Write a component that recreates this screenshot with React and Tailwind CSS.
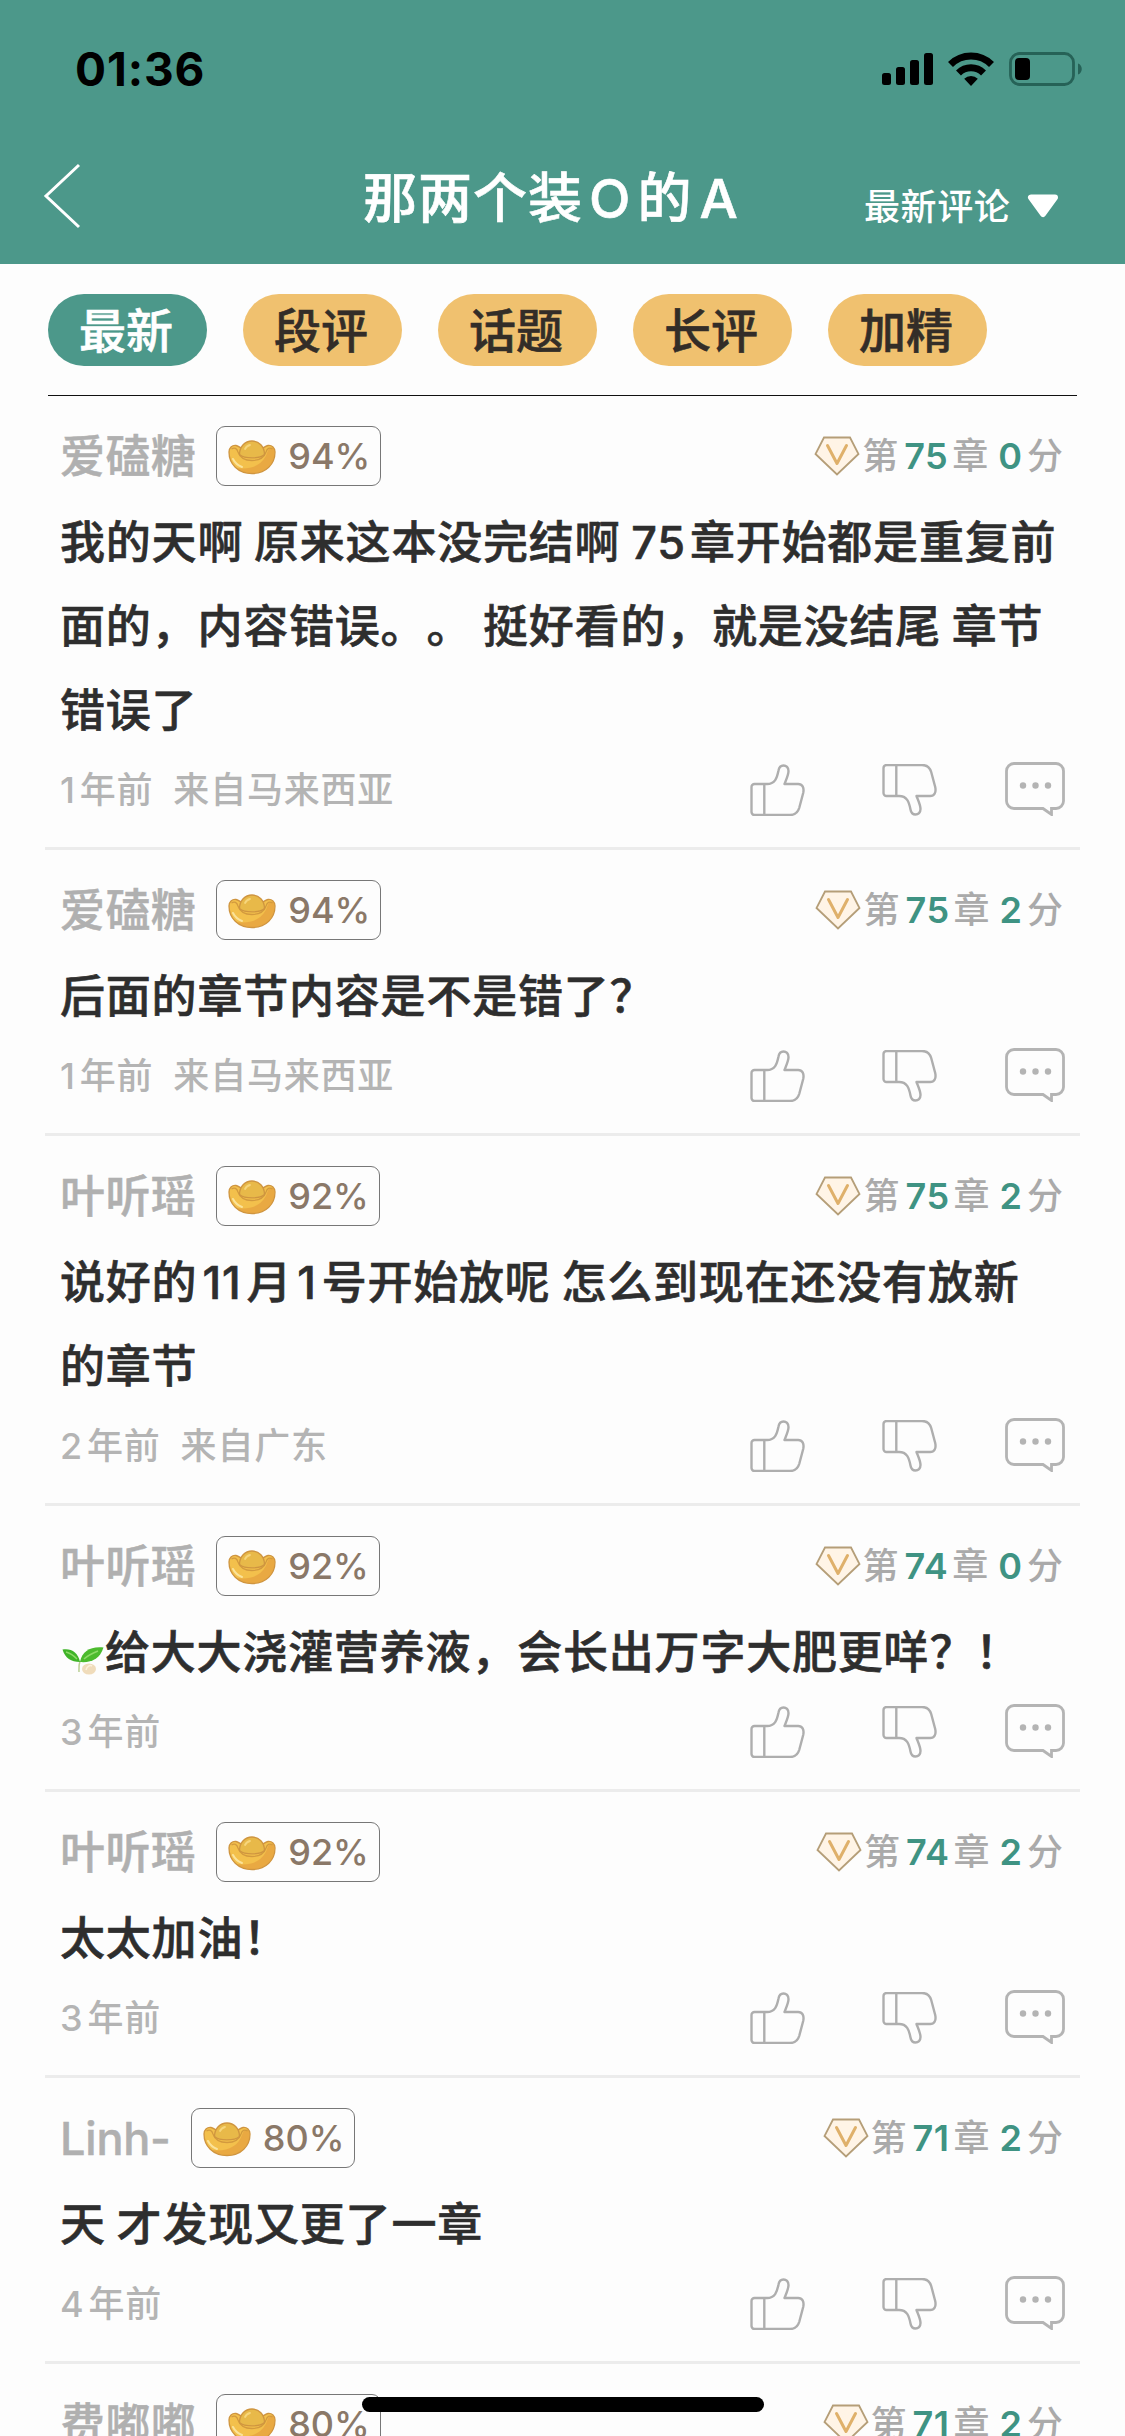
import React from 'react';

const COMMENTS = [
  { name: '爱磕糖', percent: 94, chapter: '75', score: '0', lines: ['我的天啊 原来这本没完结啊 75章开始都是重复前', '面的，内容错误。。 挺好看的，就是没结尾 章节', '错误了'], years: '1', from: '来自马来西亚' },
  { name: '爱磕糖', percent: 94, chapter: '75', score: '2', lines: ['后面的章节内容是不是错了？'], years: '1', from: '来自马来西亚' },
  { name: '叶听瑶', percent: 92, chapter: '75', score: '2', lines: ['说好的11月1号开始放呢 怎么到现在还没有放新', '的章节'], years: '2', from: '来自广东' },
  { name: '叶听瑶', percent: 92, chapter: '74', score: '0', sprout: true, lines: ['给大大浇灌营养液，会长出万字大肥更咩？！'], years: '3' },
  { name: '叶听瑶', percent: 92, chapter: '74', score: '2', lines: ['太太加油！'], years: '3' },
  { name: 'Linh-', percent: 80, chapter: '71', score: '2', lines: ['天 才发现又更了一章'], years: '4' },
  { name: '费嘟嘟', percent: 80, chapter: '71', score: '2', lines: [] },
];

const TABS = ['最新', '段评', '话题', '长评', '加精'];

const IconSignal = () => (
  <svg width="51" height="32" viewBox="0 0 51 32">
    <rect x="0" y="20" width="9" height="12" rx="2.5" />
    <rect x="14" y="14" width="9" height="18" rx="2.5" />
    <rect x="28" y="7" width="9" height="25" rx="2.5" />
    <rect x="42" y="0" width="9" height="32" rx="2.5" />
  </svg>
);

const IconWifi = () => (
  <svg width="46" height="34" viewBox="0 0 46 34">
    <g fill="none" stroke="#000" strokeWidth="7">
      <path d="M2.5 12.5a29 29 0 0 1 41 0" />
      <path d="M10.5 21a17.8 17.8 0 0 1 25 0" />
    </g>
    <path d="M23 34l-6.8-7.2a9.8 9.8 0 0 1 13.6 0z" />
  </svg>
);

const IconBattery = () => (
  <svg width="74" height="34" viewBox="0 0 74 34">
    <rect x="1.5" y="1.5" width="63" height="31" rx="9" fill="none" stroke="#266257" strokeWidth="2.8" />
    <rect x="6" y="6" width="15" height="22" rx="4" />
    <path d="M69 11.5c5 1.5 5 9.5 0 11z" fill="#266257" />
  </svg>
);

const IconIngot = () => (
  <svg width="48" height="38" viewBox="0 0 48 38" className="shrink-0">
    <path d="M1 15c0-4 3-7 7-6.500 2 .3 3 1.500 5 2.500h22c2-1 3-2.200 5-2.500 4-.5 7 2.500 7 6.500 0 12-9 21.500-23 21.500S1 27 1 15z" fill="#f3c04c" stroke="#cf9540" strokeWidth="1.300" />
    <path d="M46.500 15c0 12-9 21-22.500 21-6 0-11-2-15-5 14 2 26-3 30-15 1-3.500 4-7 6-5 1 1 1.500 2.500 1.500 4z" fill="#e39a3c" opacity=".6" />
    <path d="M3.500 12c3-2 5.500-.5 6.500 3 2 6 8 8.500 14 8.500s12-2.500 14-8.500c1-3.500 3.500-5 6.500-3" fill="none" stroke="#d39a3e" strokeWidth="1.300" />
    <path d="M11.500 17.500C11.500 9.500 17 4 24 4s12.500 5.500 12.500 13.500c-5 4.500-20 4.500-25 0z" fill="#e8b949" stroke="#cf9540" strokeWidth="1.300" />
    <path d="M5 22c2 4 5 6.500 9 8" fill="none" stroke="#fbe39a" strokeWidth="2" strokeLinecap="round" />
    <path d="M17 12c1-2 2.500-3.500 5-4" fill="none" stroke="#f7d67c" strokeWidth="1.800" strokeLinecap="round" />
  </svg>
);

const IconVip = () => (
  <svg width="46" height="40" viewBox="0 0 46 40" className="shrink-0">
    <path d="M10 1.5h26L44.5 18 23 38.5 1.5 18z" fill="#fff4e6" stroke="#b59e78" strokeWidth="1.8" />
    <path d="M13.5 9.5L23 27.5l9.500-18" fill="none" stroke="#dfb06a" strokeWidth="3" strokeLinejoin="round" strokeLinecap="round" />
  </svg>
);

const IconSprout = () => (
  <svg width="45" height="46" viewBox="0 0 45 46" className="shrink-0">
    <path d="M20 31c-1.500 4-1 8-1 11" fill="none" stroke="#b9cf93" strokeWidth="1.500" />
    <ellipse cx="29" cy="39" rx="7" ry="5.500" fill="#f0dcbb" />
    <path d="M26 40c1-4 4-5 6-4" fill="none" stroke="#fbf1dc" strokeWidth="1.500" />
    <path d="M2.500 19.500C11 18 18 22 20 32 11 32 5 28 2.500 19.500z" fill="#3fb428" />
    <path d="M43.500 17.500C31 16 22 21 20 32c11 1 20-3 23.500-14.500z" fill="#4cbb2e" />
    <path d="M24 29c4-4 9-6 14-8M6 22c4 1 8 4 11 7" fill="none" stroke="#8edb68" strokeWidth="1.500" />
  </svg>
);

const IconThumb = ({ down }) => (
  <svg width="56" height="52" viewBox="0 0 56 52" className={down ? '-scale-y-100' : ''} fill="none" stroke="#aeaeae" strokeWidth="2.4" strokeLinejoin="round">
    <path d="M14 20H4.500a3 3 0 0 0-3 3v25a3 3 0 0 0 3 3H40c5 0 8-3 9.200-7l4-15c1.200-5.500-1-9-5-9H34.500c1.500-4 4-9 4-13 0-3.500-2.200-5.500-5-5.500s-4.500 2-5 5C27 14 25 20 17 20z" />
    <path d="M14.300 20v31" />
  </svg>
);

const IconBubble = () => (
  <svg width="60" height="54" viewBox="0 0 60 54" fill="none" stroke="#b4b4b4" strokeWidth="2.8">
    <path d="M9 1.500h42a7.500 7.500 0 0 1 7.500 7.500v30a7.500 7.500 0 0 1-7.500 7.500h-4.500v6L38 46.500H9A7.500 7.500 0 0 1 1.500 39V9A7.500 7.500 0 0 1 9 1.500z" />
    <g fill="#b4b4b4" stroke="none">
      <circle cx="18" cy="23.500" r="3.200" />
      <circle cx="30.500" cy="23.500" r="3.200" />
      <circle cx="43" cy="23.500" r="3.200" />
    </g>
  </svg>
);

// small gap between digits and the hanzi next to them
const spaced = (line) => line.split(/(\d+)/).map((part, i, parts) => {
  if (i % 2 === 0) return part;
  return <span key={i} className={parts[i - 1].endsWith(' ') ? 'mr-[4px]' : 'mx-[5px]'}>{part}</span>;
});

function Header() {
  return (
    <div className="h-[264px] bg-[#4c988a] text-white">
      <div className="h-[138px] flex items-center justify-between pl-[75px] pr-[42px]">
        <span className="text-[46px] font-bold text-black leading-none tracking-[0.9px]">01:36</span>
        <div className="flex items-center">
          <IconSignal />
          <div className="ml-[15px] mr-[15px]"><IconWifi /></div>
          <IconBattery />
        </div>
      </div>
      <div className="h-[116px] grid grid-cols-[363px_1fr_261px] items-center">
        <svg width="40" height="66" viewBox="0 0 40 66" className="ml-[42px]" fill="none" stroke="#fff" strokeWidth="3">
          <path d="M37 2L4 33l33 31" />
        </svg>
        <h1 className="pt-[5px] text-[54px] font-medium leading-none tracking-[1px] whitespace-nowrap [-webkit-text-stroke:0.6px]">
          那两个装<span className="mx-[6px]">O</span>的<span className="ml-[7px]">A</span>
        </h1>
        <div className="flex items-center pt-[22px]">
          <span className="text-[36px] font-medium leading-none tracking-[0.6px]">最新评论</span>
          <svg width="32" height="24" viewBox="0 0 32 24" className="ml-[17px] mb-[3px]" fill="#fff" stroke="#fff" strokeWidth="6" strokeLinejoin="round">
            <path d="M4 3.500h24L16 20z" />
          </svg>
        </div>
      </div>
    </div>
  );
}

function Tabs() {
  return (
    <div className="mx-[48px] pt-[30px] h-[132px] flex gap-[36px] border-b border-[#111]">
      {TABS.map((tab, i) => (
        <button key={tab} className={`w-[159px] h-[72px] pr-[3px] rounded-full text-[47px] font-medium leading-none [-webkit-text-stroke:0.6px] ${i === 0 ? 'bg-[#4c988a] text-white' : 'bg-[#f0c16f] text-[#332d28]'}`}>
          {tab}
        </button>
      ))}
    </div>
  );
}

function Comment({ name, percent, chapter, score, sprout, lines, years, from }) {
  const latinName = /^[\x20-\x7e]+$/.test(name);
  return (
    <div className="mx-[45px] px-[15px] pt-[30px] border-b-[3px] border-[#ececec]">
      <div className="h-[60px] flex items-center justify-between">
        <div className="flex items-center">
          <span className={`text-[45px] font-medium leading-none text-[#b0b0b0] [-webkit-text-stroke:0.5px] ${latinName ? 'tracking-[-0.2px]' : 'tracking-[0.4px]'}`}>{name}</span>
          <div className="ml-[20px] h-[60px] flex items-center gap-[12px] pl-[11px] pr-[10px] border border-[#777] rounded-[9px]">
            <IconIngot />
            <span className="text-[36px] font-medium leading-none text-[#8a7868]">{percent}%</span>
          </div>
        </div>
        <div className="flex items-center pr-[2px] text-[36px] font-medium leading-none text-[#aaa]">
          <IconVip />
          <span className="ml-[2px]">第</span>
          <span className="ml-[6px] mr-[4px] tracking-[0.5px] font-semibold text-[#3f9383]">{chapter}</span>
          <span>章</span>
          <span className="ml-[10px] mr-[5px] font-semibold text-[#3f9383]">{score}</span>
          <span>分</span>
        </div>
      </div>
      <div className="mt-[15px] text-[45px] font-medium leading-[84px] tracking-[0.8px] [word-spacing:-2px] [text-spacing-trim:space-all] [-webkit-text-stroke:0.6px] text-[#2e2e2e] whitespace-nowrap">
        {lines.map((line) => (
          <div key={line} className="h-[84px] flex items-center">
            {sprout && <IconSprout />}
            <p>{spaced(line)}</p>
          </div>
        ))}
      </div>
      {years && (
        <div className="h-[94px] pt-[9px] flex items-start justify-between">
          <div className="h-[56px] flex items-center text-[36px] font-medium leading-none tracking-[0.8px] text-[#b4b4b4]">
            <span>{years}</span>
            <span className="ml-[4px]">年前</span>
            {from && <span className="ml-[20px]">{from}</span>}
          </div>
          <div className="flex items-end h-[54px]">
            <IconThumb />
            <div className="ml-[76px] mr-[67px]"><IconThumb down /></div>
            <IconBubble />
          </div>
        </div>
      )}
    </div>
  );
}

export default function App() {
  return (
    <div className="relative w-[1125px] h-[2436px] overflow-hidden bg-[#fdfdfd] font-['Inter','Noto_Sans_CJK_SC',sans-serif]">
      <Header />
      <Tabs />
      {COMMENTS.map((comment, i) => (
        <Comment key={i} {...comment} />
      ))}
      <div className="absolute left-[362px] bottom-[24px] w-[402px] h-[15px] rounded-full bg-black" />
    </div>
  );
}
